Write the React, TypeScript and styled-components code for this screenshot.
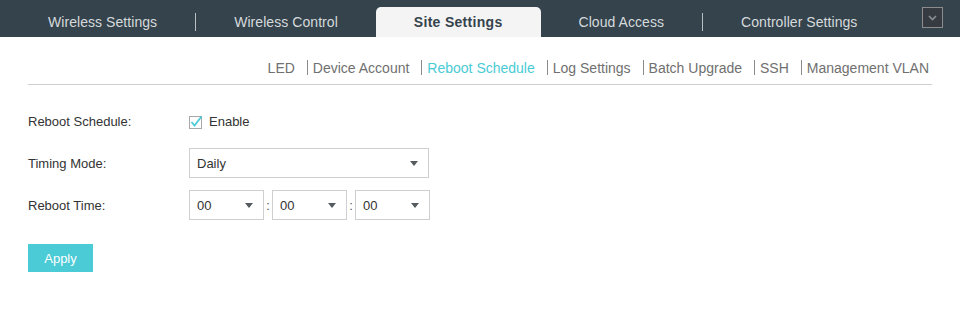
import React from "react";
import styled, { createGlobalStyle } from "styled-components";

const GlobalStyle = createGlobalStyle`
  html, body { margin: 0; padding: 0; background: #ffffff; }
  body { font-family: "Liberation Sans", Arial, sans-serif; }
`;

const Page = styled.div`
  width: 960px;
  height: 314px;
  background: #ffffff;
`;

const TopBar = styled.div`
  height: 37px;
  background: #34434c;
  display: flex;
  align-items: flex-end;
  padding-left: 10px;
  box-sizing: border-box;
`;

const Tab = styled.div<{ $active?: boolean }>`
  height: 30px;
  line-height: 31px;
  padding: 0 38px;
  font-size: 14px;
  white-space: nowrap;
  letter-spacing: ${(p) => (p.$active ? "0.3px" : "0.06px")};
  color: ${(p) => (p.$active ? "#34434c" : "#d6dadc")};
  font-weight: ${(p) => (p.$active ? 700 : 400)};
  background: ${(p) => (p.$active ? "#f4f4f4" : "transparent")};
  border-radius: ${(p) => (p.$active ? "5px 5px 0 0" : "0")};
`;

const TabDivider = styled.div`
  width: 1px;
  height: 18px;
  background: #b8bfc3;
  align-self: center;
  margin-top: 6px;
`;

const CollapseButton = styled.div`
  margin-left: auto;
  margin-right: 17px;
  align-self: flex-start;
  margin-top: 7px;
  width: 21px;
  height: 21px;
  box-sizing: border-box;
  border: 1px solid #8c8c8c;
  background: #353b40;
  display: flex;
  align-items: center;
  justify-content: center;
`;

const Content = styled.div`
  padding: 0 28px;
`;

const SubNav = styled.div`
  display: flex;
  justify-content: flex-end;
  align-items: center;
  padding: 23px 3px 8px 0;
  border-bottom: 1px solid #cfcfcf;
`;

const SubLink = styled.span<{ $active?: boolean }>`
  font-size: 14px;
  line-height: 16px;
  color: ${(p) => (p.$active ? "#4acbd6" : "#707070")};
  white-space: nowrap;
`;

const SubDivider = styled.span`
  width: 1px;
  height: 15px;
  background: #8a8a8a;
  margin: -1px 5px 0 12px;
`;

const Form = styled.div`
  padding-top: 21px;
  display: flex;
  flex-direction: column;
  gap: 12px;
`;

const Row = styled.div`
  display: flex;
  align-items: center;
  height: 30px;
`;

const Label = styled.div`
  width: 161px;
  font-size: 13px;
  color: #333333;
`;

const CheckWrap = styled.label`
  display: flex;
  align-items: center;
  gap: 5px;
  font-size: 13px;
  color: #333333;
`;

const SelectBox = styled.div<{ $width: number }>`
  width: ${(p) => p.$width}px;
  height: 30px;
  box-sizing: border-box;
  border: 1px solid #cfcfcf;
  background: #ffffff;
  display: flex;
  align-items: center;
  justify-content: space-between;
  padding: 0 10px 0 7px;
  font-size: 13px;
  color: #333333;
`;

const Arrow = styled.span`
  width: 0;
  height: 0;
  border-left: 4px solid transparent;
  border-right: 4px solid transparent;
  border-top: 5px solid #555b5f;
`;

const TimeGroup = styled.div`
  display: flex;
  align-items: center;
`;

const Colon = styled.span`
  width: 8px;
  text-align: center;
  font-size: 13px;
  color: #555555;
`;

const ApplyButton = styled.button`
  margin-top: 12px;
  width: 65px;
  height: 28px;
  border: none;
  background: #4acbd6;
  color: #ffffff;
  font-family: "Liberation Sans", Arial, sans-serif;
  font-size: 13px;
  padding: 0;
  align-self: flex-start;
`;

const Select = ({ value, width }: { value: string; width: number }) => (
  <SelectBox $width={width}>
    <span>{value}</span>
    <Arrow />
  </SelectBox>
);

const subItems = [
  "LED",
  "Device Account",
  "Reboot Schedule",
  "Log Settings",
  "Batch Upgrade",
  "SSH",
  "Management VLAN",
];

export default function App() {
  return (
    <Page>
      <GlobalStyle />
      <TopBar>
        <Tab>Wireless Settings</Tab>
        <TabDivider />
        <Tab>Wireless Control</Tab>
        <Tab $active>Site Settings</Tab>
        <Tab>Cloud Access</Tab>
        <TabDivider />
        <Tab>Controller Settings</Tab>
        <CollapseButton>
          <svg width="9" height="6" viewBox="0 0 9 6">
            <path d="M1 1 L4.5 4.5 L8 1" stroke="#8a8f93" strokeWidth="1.6" fill="none" />
          </svg>
        </CollapseButton>
      </TopBar>
      <Content>
        <SubNav>
          {subItems.map((item, i) => (
            <React.Fragment key={item}>
              <SubLink $active={item === "Reboot Schedule"}>{item}</SubLink>
              {i < subItems.length - 1 && <SubDivider />}
            </React.Fragment>
          ))}
        </SubNav>
        <Form>
          <Row>
            <Label>Reboot Schedule:</Label>
            <CheckWrap>
              <svg width="15" height="15" viewBox="0 0 15 15">
                <rect x="0.5" y="2.5" width="12" height="12" fill="#fff" stroke="#a8a8a8" />
                <path d="M2.5 8 L5.5 11.5 L12.5 2.5" stroke="#4acbd6" strokeWidth="1.8" fill="none" />
              </svg>
              Enable
            </CheckWrap>
          </Row>
          <Row>
            <Label>Timing Mode:</Label>
            <Select value="Daily" width={240} />
          </Row>
          <Row>
            <Label>Reboot Time:</Label>
            <TimeGroup>
              <Select value="00" width={75} />
              <Colon>:</Colon>
              <Select value="00" width={75} />
              <Colon>:</Colon>
              <Select value="00" width={75} />
            </TimeGroup>
          </Row>
          <ApplyButton>Apply</ApplyButton>
        </Form>
      </Content>
    </Page>
  );
}
